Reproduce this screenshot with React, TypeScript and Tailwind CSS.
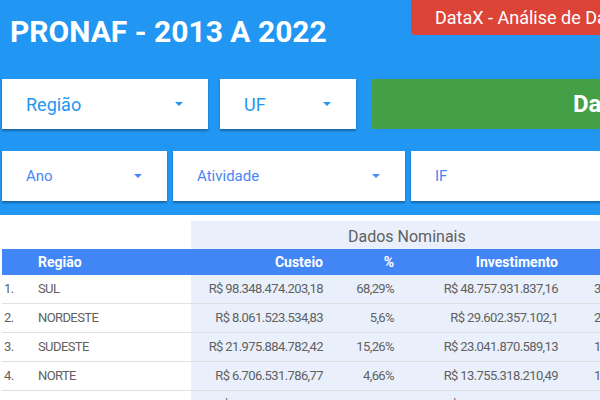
import React from "react";

const rows = [
  { n: "1.", regiao: "SUL", custeio: "R$ 98.348.474.203,18", pc: "68,29%", inv: "R$ 48.757.931.837,16", pi: "33,83%" },
  { n: "2.", regiao: "NORDESTE", custeio: "R$ 8.061.523.534,83", pc: "5,6%", inv: "R$ 29.602.357.102,1", pi: "20,54%" },
  { n: "3.", regiao: "SUDESTE", custeio: "R$ 21.975.884.782,42", pc: "15,26%", inv: "R$ 23.041.870.589,13", pi: "15,99%" },
  { n: "4.", regiao: "NORTE", custeio: "R$ 6.706.531.786,77", pc: "4,66%", inv: "R$ 13.755.318.210,49", pi: "10,22%" },
  { n: "5.", regiao: "CENTRO-OESTE", custeio: "R$ 8.906.011.298,34", pc: "6,18%", inv: "R$ 28.830.464.115,02", pi: "20,01%" },
];

function Arrow({ color }: { color: string }) {
  return <span className={`w-0 h-0 border-x-[4px] border-t-[4px] border-x-transparent ${color}`} />;
}

function Dropdown({ label, width, big }: { label: string; width: string; big?: boolean }) {
  return (
    <div
      className={`${width} shrink-0 h-[50px] bg-white flex items-center justify-between pl-[24px] pr-[25px] shadow-[0_2px_2px_rgba(0,0,0,0.3)] ${
        big ? "text-[18px] text-[#2196f3]" : "text-[15px] text-[#4a86f5]"
      }`}
    >
      <span>{label}</span>
      <Arrow color={big ? "border-t-[#2196f3]" : "border-t-[#4a86f5]"} />
    </div>
  );
}

export default function App() {
  const cols = "grid grid-cols-[35px_154px_139px_71px_164px_80px]";
  return (
    <div className="w-[600px] h-[400px] overflow-hidden bg-white font-['Roboto',sans-serif]">
      {/* Header */}
      <div className="bg-[#2196f3] h-[215px] overflow-hidden">
        <div className="flex h-[79px]">
          <h1 className="w-[411px] shrink-0 pl-[10px] pt-[14px] text-[30px] leading-[36px] font-bold text-white">
            PRONAF - 2013 A 2022
          </h1>
          <div className="w-[300px] shrink-0 h-[35px] rounded-b-[4px] bg-[#dd4438] text-white text-[18px] pl-[24px] flex items-center whitespace-nowrap">
            DataX - Análise de Dados
          </div>
        </div>
        <div className="flex pl-[2px]">
          <Dropdown label="Região" width="w-[206px]" big />
          <div className="ml-[12px] shrink-0">
            <Dropdown label="UF" width="w-[136px]" big />
          </div>
          <div className="ml-[16px] w-[300px] shrink-0 h-[50px] bg-[#43a047] text-white font-bold text-[24px] flex items-center pl-[201px] whitespace-nowrap">
            Dados
          </div>
        </div>
        <div className="flex pl-[2px] mt-[22px] gap-[6px]">
          <Dropdown label="Ano" width="w-[165px]" />
          <Dropdown label="Atividade" width="w-[232px]" />
          <div className="w-[250px] shrink-0 h-[50px] bg-white flex items-center pl-[24px] text-[15px] text-[#4a86f5] shadow-[0_2px_2px_rgba(0,0,0,0.3)]">
            IF
          </div>
        </div>
      </div>

      {/* Table */}
      <div className="mt-[6px] ml-[2px] w-[643px] text-[13px] text-[#616161]">
        <div className={`${cols} h-[28px]`}>
          <div className="col-span-2" />
          <div className="col-span-4 bg-[#e9f0fb] pl-[157px] flex items-center text-[16px] text-[#616161] pt-[3px]">
            Dados Nominais
          </div>
        </div>
        <div className={`${cols} h-[26px] bg-[#4285f4] text-white text-[14px] font-bold items-center`}>
          <div />
          <div className="pl-[1px]">Região</div>
          <div className="text-right pr-[7px]">Custeio</div>
          <div className="text-right pr-[7px]">%</div>
          <div className="text-right pr-[7px]">Investimento</div>
          <div className="text-right pr-[7px]">%</div>
        </div>
        {rows.map((r) => (
          <div key={r.n} className={`${cols} h-[29px] border-b border-[#e0e0e0] tracking-[-0.6px]`}>
            <div className="pl-[2px] flex items-center">{r.n}</div>
            <div className="pl-[1px] flex items-center">{r.regiao}</div>
            <div className="bg-[#e9f0fb] flex items-center justify-end pr-[7px] whitespace-nowrap">{r.custeio}</div>
            <div className="bg-[#e9f0fb] flex items-center justify-end pr-[7px]">{r.pc}</div>
            <div className="bg-[#e9f0fb] flex items-center justify-end pr-[7px] whitespace-nowrap">{r.inv}</div>
            <div className="bg-[#e9f0fb] flex items-center pl-[29px]">{r.pi}</div>
          </div>
        ))}
      </div>
    </div>
  );
}
